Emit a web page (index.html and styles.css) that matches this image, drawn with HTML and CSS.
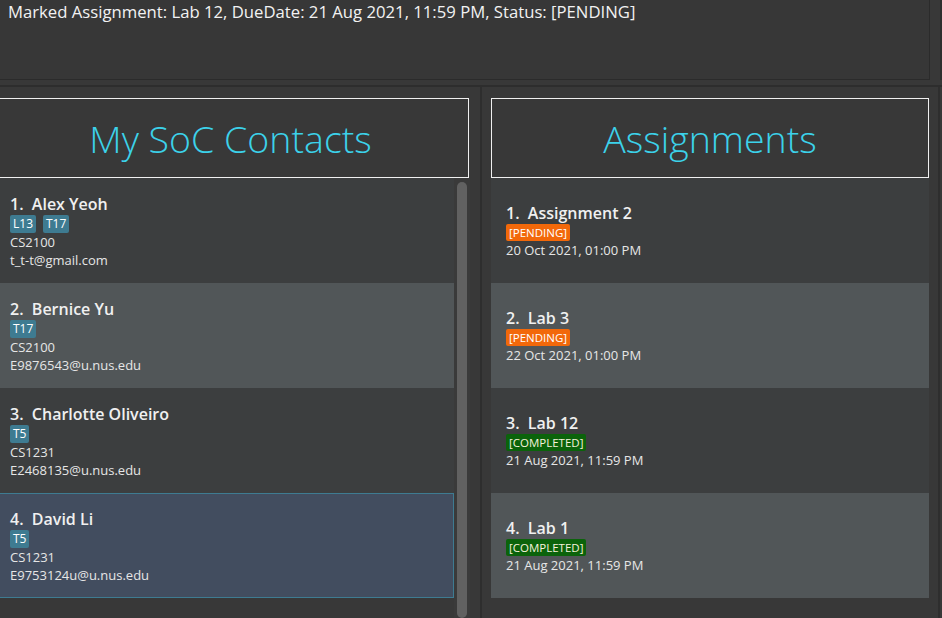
FILE: index.html
```html
<!DOCTYPE html>
<html>
<head>
<meta charset="utf-8">
<link rel="stylesheet" href="styles.css">
</head>
<body>
<div class="app">
  <div class="result">
    <div class="result-box">Marked Assignment: Lab 12, DueDate: 21 Aug 2021, 11:59 PM, Status: [PENDING]</div>
    <div class="result-edge"></div>
  </div>
  <div class="band"></div>
  <div class="panels">
    <section class="panel panel-left">
      <div class="header header-left">My SoC Contacts</div>
      <div class="list-wrap">
        <ul class="list list-left">
          <li class="cell">
            <div class="name">1.&nbsp; Alex Yeoh</div>
            <div class="tags"><span class="tag">L13</span><span class="tag">T17</span></div>
            <div class="line">CS2100</div>
            <div class="line">t_t-t@gmail.com</div>
          </li>
          <li class="cell odd">
            <div class="name">2.&nbsp; Bernice Yu</div>
            <div class="tags"><span class="tag">T17</span></div>
            <div class="line">CS2100</div>
            <div class="line">E9876543@u.nus.edu</div>
          </li>
          <li class="cell">
            <div class="name">3.&nbsp; Charlotte Oliveiro</div>
            <div class="tags"><span class="tag">T5</span></div>
            <div class="line">CS1231</div>
            <div class="line">E2468135@u.nus.edu</div>
          </li>
          <li class="cell selected">
            <div class="name">4.&nbsp; David Li</div>
            <div class="tags"><span class="tag">T5</span></div>
            <div class="line">CS1231</div>
            <div class="line">E9753124u@u.nus.edu</div>
          </li>
        </ul>
        <div class="scrollbar"><div class="thumb"></div></div>
      </div>
    </section>
    <div class="divider"></div>
    <section class="panel panel-right">
      <div class="header header-right">Assignments</div>
      <ul class="list list-right">
        <li class="cell acell">
          <div class="name">1.&nbsp; Assignment 2</div>
          <div class="tags"><span class="status pending">[PENDING]</span></div>
          <div class="line">20 Oct 2021, 01:00 PM</div>
        </li>
        <li class="cell acell odd">
          <div class="name">2.&nbsp; Lab 3</div>
          <div class="tags"><span class="status pending">[PENDING]</span></div>
          <div class="line">22 Oct 2021, 01:00 PM</div>
        </li>
        <li class="cell acell">
          <div class="name">3.&nbsp; Lab 12</div>
          <div class="tags"><span class="status completed">[COMPLETED]</span></div>
          <div class="line">21 Aug 2021, 11:59 PM</div>
        </li>
        <li class="cell acell odd">
          <div class="name">4.&nbsp; Lab 1</div>
          <div class="tags"><span class="status completed">[COMPLETED]</span></div>
          <div class="line">21 Aug 2021, 11:59 PM</div>
        </li>
      </ul>
    </section>
    <div class="right-edge"></div>
  </div>
</div>
</body>
</html>
```
FILE: styles.css
```css
* { box-sizing: border-box; }
html, body {
  margin: 0;
  padding: 0;
  background: #383838;
  overflow: hidden;
}
body {
  width: 942px;
  height: 618px;
  font-family: "Open Sans", "Noto Sans", sans-serif;
  color: #ffffff;
}
.app {
  display: flex;
  flex-direction: column;
  height: 618px;
  overflow: hidden;
}
.result {
  display: flex;
  height: 80px;
  flex-shrink: 0;
}
.result-box {
  width: 930px;
  height: 80px;
  background: #373737;
  border-right: 1px solid #2b2b2b;
  border-bottom: 1px solid #2b2b2b;
  padding: 0 8px;
  font-size: 16.7px;
  line-height: 24px;
  color: #f2f2f2;
}
.result-edge {
  flex: 1;
  border-right: 2px solid #2e2e2e;
}
.band {
  height: 7px;
  flex-shrink: 0;
  border-bottom: 2px solid #2d2d2d;
  background: #383838;
}
.panels {
  display: flex;
  flex: 1;
  min-height: 0;
}
.panel {
  padding-top: 11px;
  display: flex;
  flex-direction: column;
  min-height: 0;
}
.panel-left {
  width: 480px;
}
.divider {
  width: 2px;
  background: #2e2e2e;
}
.panel-right {
  width: 447px;
  padding-left: 9px;
}
.right-edge {
  flex: 1;
  border-right: 2px solid #2e2e2e;
  margin-right: 2px;
}
.header {
  height: 80px;
  flex-shrink: 0;
  border: 1px solid #f0f0f0;
  display: flex;
  align-items: center;
  justify-content: center;
  font-size: 37.5px;
  font-weight: 300;
  color: #3cd2ea;
}
.header-left {
  width: 477px;
  margin-left: -8px;
}
.header-right {
  width: 438px;
}
.list-wrap {
  display: flex;
  flex: 1;
  min-height: 0;
}
.list {
  list-style: none;
  margin: 0;
  padding: 0;
}
.list-left {
  width: 454px;
}
.list-right {
  width: 438px;
}
.scrollbar {
  width: 16px;
  background: #3a3a3a;
  padding: 4px 3px 0 3px;
  display: flex;
  flex-direction: column;
}
.thumb {
  flex: 1;
  width: 10px;
  background: #616161;
  border-radius: 5px;
}
.cell {
  height: 105px;
  display: flex;
  flex-direction: column;
  justify-content: center;
  padding-left: 10px;
  background: #3c3e3f;
}
.cell.odd {
  background: #515658;
}
.cell.selected {
  background: #424d5f;
  border: 1px solid #3e7b91;
  border-left: none;
}
.acell {
  padding-left: 15px;
}
.name {
  font-size: 16px;
  font-weight: 600;
  line-height: 22px;
  color: #f0f0f0;
}
.tags {
  display: flex;
  gap: 7px;
  height: 18px;
  align-items: center;
}
.acell .tags {
  height: 17px;
}
.tag {
  background: #3e7b91;
  color: #ffffff;
  font-size: 12px;
  line-height: 18px;
  height: 18px;
  padding: 0 3px;
  border-radius: 2px;
}
.status {
  font-size: 11.5px;
  line-height: 17px;
  height: 17px;
  padding: 0 3px;
  border-radius: 2px;
  color: #ffffff;
}
.pending {
  background: #f2680a;
}
.completed {
  background: #0b630b;
  color: #f6f2dc;
}
.line {
  font-size: 13px;
  line-height: 18px;
  color: #e6e6e6;
}
```
